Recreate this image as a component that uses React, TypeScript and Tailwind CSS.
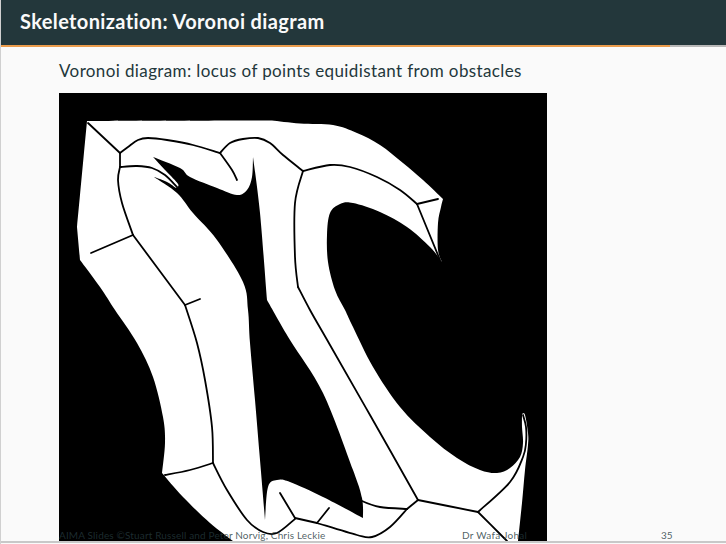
type Pt = [number, number]

// Catmull-Rom through the points, so the traced edges stay smooth
const spline = (pts: Pt[], start = true) => {
    let d = start ? `M${pts[0][0]} ${pts[0][1]}` : `L${pts[0][0]} ${pts[0][1]}`
    for (let i = 0; i < pts.length - 1; i++) {
        const p0 = pts[i - 1] ?? pts[i]
        const p1 = pts[i]
        const p2 = pts[i + 1]
        const p3 = pts[i + 2] ?? p2
        const c1x = p1[0] + (p2[0] - p0[0]) / 6
        const c1y = p1[1] + (p2[1] - p0[1]) / 6
        const c2x = p2[0] - (p3[0] - p1[0]) / 6
        const c2y = p2[1] - (p3[1] - p1[1]) / 6
        d += ` C${c1x.toFixed(1)} ${c1y.toFixed(1)} ${c2x.toFixed(1)} ${c2y.toFixed(1)} ${p2[0]} ${p2[1]}`
    }
    return d
}

// Each run is smooth, corners happen between runs
const outline = (runs: Pt[][]) =>
    runs.map((run, i) => spline(run, i === 0)).join(' ') + ' Z'

const whiteShape: Pt[][] = [
    [[87, 121], [272, 120.5]],
    [[272, 120.5], [300, 123.5], [333, 125], [357, 133], [380, 145], [403, 163], [423, 180], [443, 199]],
    [[443, 199], [441, 207], [438, 223], [438, 250], [442, 262]],
    [[442, 262], [430, 247], [407, 227], [380, 212], [353, 203], [340, 204], [330, 213], [327, 235], [328, 262], [335, 290], [345, 310], [353, 327], [373, 367], [400, 407], [430, 437], [457, 458], [480, 470], [497, 473], [510, 468], [520, 457], [523, 443], [522, 427], [522, 414]],
    [[522, 414], [525, 415], [528, 433], [528, 445], [525, 470], [522, 503], [518, 541]],
    [[518, 541], [233, 541]],
    [[233, 541], [210, 523], [183, 497], [162, 473]],
    [[162, 473], [165, 443], [163, 417], [153, 377], [137, 343], [115, 310], [100, 287], [80, 260]],
    [[80, 260], [77, 227]],
    [[77, 227], [87, 121]],
]

const centreHole: Pt[][] = [
    [[153, 157], [180, 168], [190, 177], [217, 188], [237, 195], [247, 190], [252, 177], [253, 157]],
    [[253, 157], [260, 213], [267, 300]],
    [[267, 300], [290, 340], [323, 393], [353, 470], [362, 498], [363, 518]],
    [[363, 518], [323, 497], [290, 482], [277, 480], [268, 487], [265, 520]],
    [[265, 520], [260, 460], [255, 400], [250, 343], [248, 310], [243, 282], [217, 240], [193, 213], [177, 193], [154, 177]],
    [[154, 177], [167, 182], [176, 188]],
    [[176, 188], [178, 184], [166, 171], [153, 157]],
]

// Split at the junctions, a branch point is a corner
const ridges: Pt[][] = [
    [[88, 123], [120, 153]],
    [[120, 153], [128, 147], [138, 140], [148, 138], [167, 140], [193, 145], [220, 153]],
    [[220, 153], [230, 143], [243, 139], [258, 138], [270, 143], [283, 155], [303, 171]],
    [[220, 153], [232, 170], [237, 180]],
    [[120, 153], [120, 167]],
    [[120, 167], [118, 180], [122, 203], [133, 235]],
    [[133, 235], [185, 305]],
    [[185, 305], [197, 343], [205, 380], [212, 427], [213, 463]],
    [[120, 167], [137, 166], [152, 168], [165, 175], [177, 187]],
    [[133, 235], [91, 253]],
    [[185, 305], [200, 299]],
    [[213, 463], [190, 470], [165, 475]],
    [[213, 463], [227, 490], [247, 520], [263, 532], [277, 533], [295, 519]],
    [[280, 493], [295, 518]],
    [[295, 518], [317, 523]],
    [[317, 523], [357, 535], [372, 537], [390, 527], [407, 509]],
    [[407, 509], [418, 500]],
    [[317, 523], [329, 508]],
    [[407, 509], [380, 507], [362, 501], [358, 497]],
    [[418, 500], [478, 512]],
    [[478, 512], [510, 482], [523, 457], [526, 443], [526, 427], [523, 415]],
    [[478, 512], [503, 537], [507, 541]],
    [[418, 500], [370, 415], [330, 345], [310, 310], [298, 287]],
    [[298, 287], [295, 257], [295, 203], [303, 171]],
    [[303, 171], [330, 165], [350, 167], [377, 177], [400, 190], [417, 204]],
    [[417, 204], [438, 199]],
    [[417, 204], [440, 260]],
]

const VoronoiFigure = () => (
    <svg
        viewBox="59 93 488 448"
        className="block w-[488px] h-[448px] bg-black"
    >
        <path d={outline(whiteShape)} fill="#fff" />
        <path d={outline(centreHole)} fill="#000" />
        {ridges.map((ridge, index) => (
            <path
                key={index}
                d={spline(ridge)}
                fill="none"
                stroke="#000"
                strokeWidth={1.8}
                strokeLinecap="round"
                strokeLinejoin="round"
            />
        ))}
    </svg>
)

const App = () => {
    return (
        <section className="relative w-[726px] h-[544px] overflow-hidden bg-[#fafafa] border-l border-[#d0d0d0] font-['Lato',sans-serif] text-[#23373b]">
            {/* Barre de titre */}
            <header className="h-[45px] bg-[#23373b] flex items-center pl-[19px] pb-[3px]">
                <h1 className="text-[20px] font-bold text-[#fafafa] tracking-[0.37px]">
                    Skeletonization: Voronoi diagram
                </h1>
            </header>
            <div className="h-[2px] bg-[#b8b8b8]">
                <div className="w-[669px] h-full bg-[#eb9c4c]" />
            </div>

            <main className="pl-[58px]">
                <p className="h-[46px] pt-[12px] text-[17px] leading-[23px] tracking-[0.38px]">
                    Voronoi diagram: locus of points equidistant from obstacles
                </p>
                <VoronoiFigure />
            </main>

            {/* Pied de page, par-dessus l'image */}
            <footer className="absolute inset-x-0 bottom-[3px] flex pl-[58px] text-[10px] leading-[12px] text-[#23373b]/80">
                <span className="w-[403px] tracking-[0.15px]">
                    AIMA Slides ©Stuart Russell and Peter Norvig, Chris Leckie
                </span>
                <span className="w-[199px] tracking-[0.3px]">Dr Wafa Johal</span>
                <span>35</span>
            </footer>
            <div className="absolute inset-x-0 bottom-[1px] h-[2px] bg-[#c8c8c8]" />
        </section>
    )
}

export default App
